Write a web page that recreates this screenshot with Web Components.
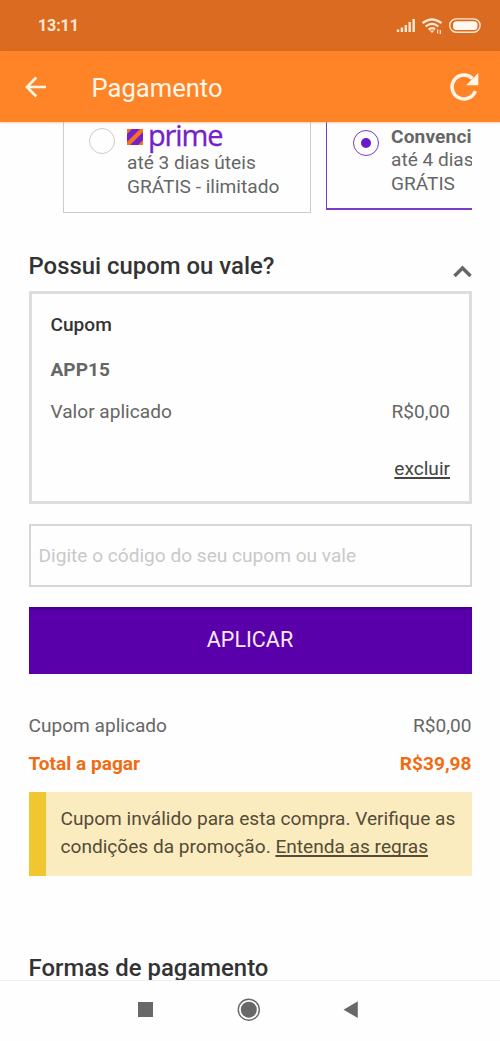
<!DOCTYPE html>
<html lang="pt-BR">
<head>
<meta charset="utf-8">
<title>Pagamento</title>
<style>
html,body{margin:0;height:100%;overflow:hidden;background:#fefefe}
body{font-family:Roboto,"Liberation Sans",sans-serif;font-size:19.100px;line-height:24px;color:#666}
</style>
</head>
<body>
<payment-app></payment-app>
<script>
const define = (name, html) => customElements.define(name, class extends HTMLElement {
  constructor() {
    super();
    const t = document.createElement('template');
    t.innerHTML = html;
    this.attachShadow({mode: 'open'}).append(t.content.cloneNode(true));
  }
});

define('status-bar', `
<style>
:host{display:flex;height:51px;background:#da6b20;color:#ffe9d3;box-sizing:border-box;padding:0 19px 0 38px;align-items:center;justify-content:space-between}
span{font-size:16px;font-weight:700;letter-spacing:-.1px;line-height:20px;margin-top:1px}
svg{display:block}
</style>
<span>13:11</span>
<svg width="86" height="20" viewBox="395 16 86 20" fill="none" stroke="#ffe9d3">
  <path d="M398 29.5v2.5M401.9 27.5v4.500M405.800 25v7M409.700 22v10M413.700 19v13" stroke-width="2.400"/>
  <path d="M422.500 23.200Q432 15.500 441.500 23.200M425.600 26.500Q432 21.200 438.400 26.500M428.600 29.500Q432 27 435 29.300" stroke-width="2.200"/>
  <path d="M429.700 30.500h4.600L432 33z" fill="#ffe9d3" stroke="none"/>
  <path d="M437.600 29.500v4M440.300 30v4" stroke-width="1.200"/>
  <rect x="449.700" y="18.900" width="30.400" height="13.400" rx="6.700" stroke-width="1.400"/>
  <rect x="453" y="21.200" width="24.500" height="8.800" rx="3.500" fill="#fff8ee" stroke="none"/>
</svg>`);

define('app-bar', `
<style>
:host{display:flex;height:71px;background:#ff8427;color:#fff7e9;box-sizing:border-box;padding:0 20px 0 24px;align-items:center;box-shadow:0 1px 2px #ff842766;position:relative;z-index:1}
h1{margin:2px 0 0 43.500px;font-size:25.600px;font-weight:400;line-height:30px;flex:1}
</style>
<svg width="24" height="24" viewBox="24 75 24 24" fill="none" stroke="#fff7e9" stroke-width="2.600"><path d="M46 87H27.500M36.300 77.500L26.900 87L36.300 96.500"/></svg>
<h1><slot></slot></h1>
<svg width="32" height="32" viewBox="448 71 32 32"><path d="M475.300 91.200A12 12 0 1 1 472.500 78.400" fill="none" stroke="#fff7e9" stroke-width="3.500"/><path d="M478.300 73V85.200H466.200z" fill="#fff7e9"/></svg>`);

define('shipping-option', `
<style>
:host{display:flex;flex:none;box-sizing:border-box;width:248px;height:91px;border:1px solid #ccc;border-top:0;padding:2px 0 0 25px;gap:12px;white-space:nowrap}
:host([selected]){height:88px;border:solid #7a3cc8;border-width:0 2px 2px 1.500px;padding-left:26px}
i{flex:none;box-sizing:border-box;width:26px;height:26px;border:1.500px solid #ccc;border-radius:50%;margin-top:4px;display:grid;place-items:center}
:host([selected]) i{border-color:#7a3cc8;margin-top:6px}
:host([selected]) i::after{content:"";width:10px;height:10px;border-radius:50%;background:#6a1bc9}
</style>
<i></i><div><slot></slot></div>`);

define('prime-logo', `
<style>
:host{display:flex;gap:5px;height:27px;color:#7421ca;font:400 29px/27px "Open Sans","Noto Sans",sans-serif;letter-spacing:-1.150px}
svg{flex:none;margin-top:5px}
span{margin-top:-3px;-webkit-text-stroke:.3px #7421ca}
</style>
<svg width="16" height="16" viewBox="0 0 16 16"><path fill="#f7711e" d="M0 0h16v16H0z"/><path fill="#7421ca" d="M5 0H13L0 13V5zM16 3V11L11 16H3z"/></svg><span>prime</span>`);

define('shipping-list', `
<style>
:host{display:flex;gap:15px;height:91px;margin:0 28.500px 0 63px;overflow:hidden}
b{font-weight:700;display:block;letter-spacing:.15px;position:relative;top:1px}
</style>
<shipping-option><prime-logo></prime-logo><div>até 3 dias úteis</div><div>GRÁTIS - ilimitado</div></shipping-option>
<shipping-option selected><b>Convencional</b><div>até 4 dias úteis</div><div>GRÁTIS</div></shipping-option>`);

define('section-title', `
<style>
:host{display:flex;justify-content:space-between;height:30px;color:#333}
h2{margin:0;font-size:23.900px;font-weight:500;line-height:30px}
</style>
<h2><slot></slot></h2><slot name="end"></slot>`);

define('value-row', `
<style>:host{display:flex;justify-content:space-between;height:24px}
:host([strong]){font-weight:700;color:#f26b12}</style>
<slot name="label"></slot><slot></slot>`);

define('coupon-card', `
<style>
:host{display:block;box-sizing:border-box;height:213px;border:3px solid #ddd;padding:19px 18.500px 0 19px}
.t{color:#333;font-weight:500;margin-bottom:21px}
.c{font-weight:700;margin-bottom:18px}
.x{display:flex;justify-content:flex-end;margin-top:33px;color:#444}
u{text-underline-offset:2px;text-decoration-thickness:1.500px;text-decoration-skip-ink:none}
</style>
<div class="t">Cupom</div><div class="c">APP15</div>
<value-row><span slot="label">Valor aplicado</span><span>R$0,00</span></value-row>
<div class="x"><u>excluir</u></div>`);

define('coupon-field', `
<style>
:host{display:flex;align-items:center;box-sizing:border-box;height:63px;border:2px solid #d6d6d6;padding:0 8px;color:#c9c9c9}
</style><span><slot></slot></span>`);

define('primary-button', `
<style>
:host{display:flex;align-items:center;justify-content:center;box-sizing:border-box;height:67px;padding-bottom:2px;background:#5a00aa;box-shadow:inset 0 2px 2px #43008a;color:#fbeafc;font-size:21.500px}
</style><slot></slot>`);

define('alert-box', `
<style>
:host{display:block;box-sizing:border-box;height:84px;background:#faecbf;border-left:17px solid #f0c631;padding:13px 0 0 15px;color:#554b38;line-height:28px;white-space:nowrap}
</style><slot></slot>`);

define('nav-bar', `
<style>
:host{display:flex;flex:none;height:61px;box-sizing:border-box;border-top:1px solid #f0f0f0;background:#fefefe}
svg{display:block}
</style>
<svg width="500" height="60" viewBox="0 981 500 60" fill="#686868"><path d="M138 1002h15v15h-15zM343.500 1009.700L357.800 1001.300V1018z"/><circle cx="248.800" cy="1009.700" r="8"/><circle cx="248.800" cy="1009.700" r="10.500" fill="none" stroke="#686868" stroke-width="1.400"/></svg>`);

define('payment-app', `
<style>
:host{display:flex;flex-direction:column;width:500px;height:1041px;overflow:hidden}
main{flex:1;min-height:0;overflow:hidden}
.body{margin:0 28.500px}
section-title.a{margin-top:38px}
coupon-card{margin-top:10px}
coupon-field{margin-top:20px}
primary-button{margin-top:20px}
.r1{margin-top:40px}
.r2{margin-top:14px}
alert-box{margin-top:16px}
section-title.z{margin-top:77px}
svg{margin-top:13px}
u{text-underline-offset:2px;text-decoration-thickness:1.500px;text-decoration-skip-ink:none}
</style>
<status-bar></status-bar>
<app-bar>Pagamento</app-bar>
<main>
<shipping-list></shipping-list>
<div class="body">
<section-title class="a">Possui cupom ou vale?<svg slot="end" width="19" height="14" viewBox="0 0 19 14" fill="none" stroke="#666" stroke-width="3.500"><path d="M1.500 12L9.500 4L17.500 12"/></svg></section-title>
<coupon-card></coupon-card>
<coupon-field>Digite o código do seu cupom ou vale</coupon-field>
<primary-button>APLICAR</primary-button>
<value-row class="r1"><span slot="label">Cupom aplicado</span>R$0,00</value-row>
<value-row class="r2" strong><span slot="label">Total a pagar</span>R$39,98</value-row>
<alert-box>Cupom inválido para esta compra. Verifique as<br>condições da promoção. <u>Entenda as regras</u></alert-box>
<section-title class="z">Formas de pagamento</section-title>
</div>
</main>
<nav-bar></nav-bar>`);
</script>
</body>
</html>
